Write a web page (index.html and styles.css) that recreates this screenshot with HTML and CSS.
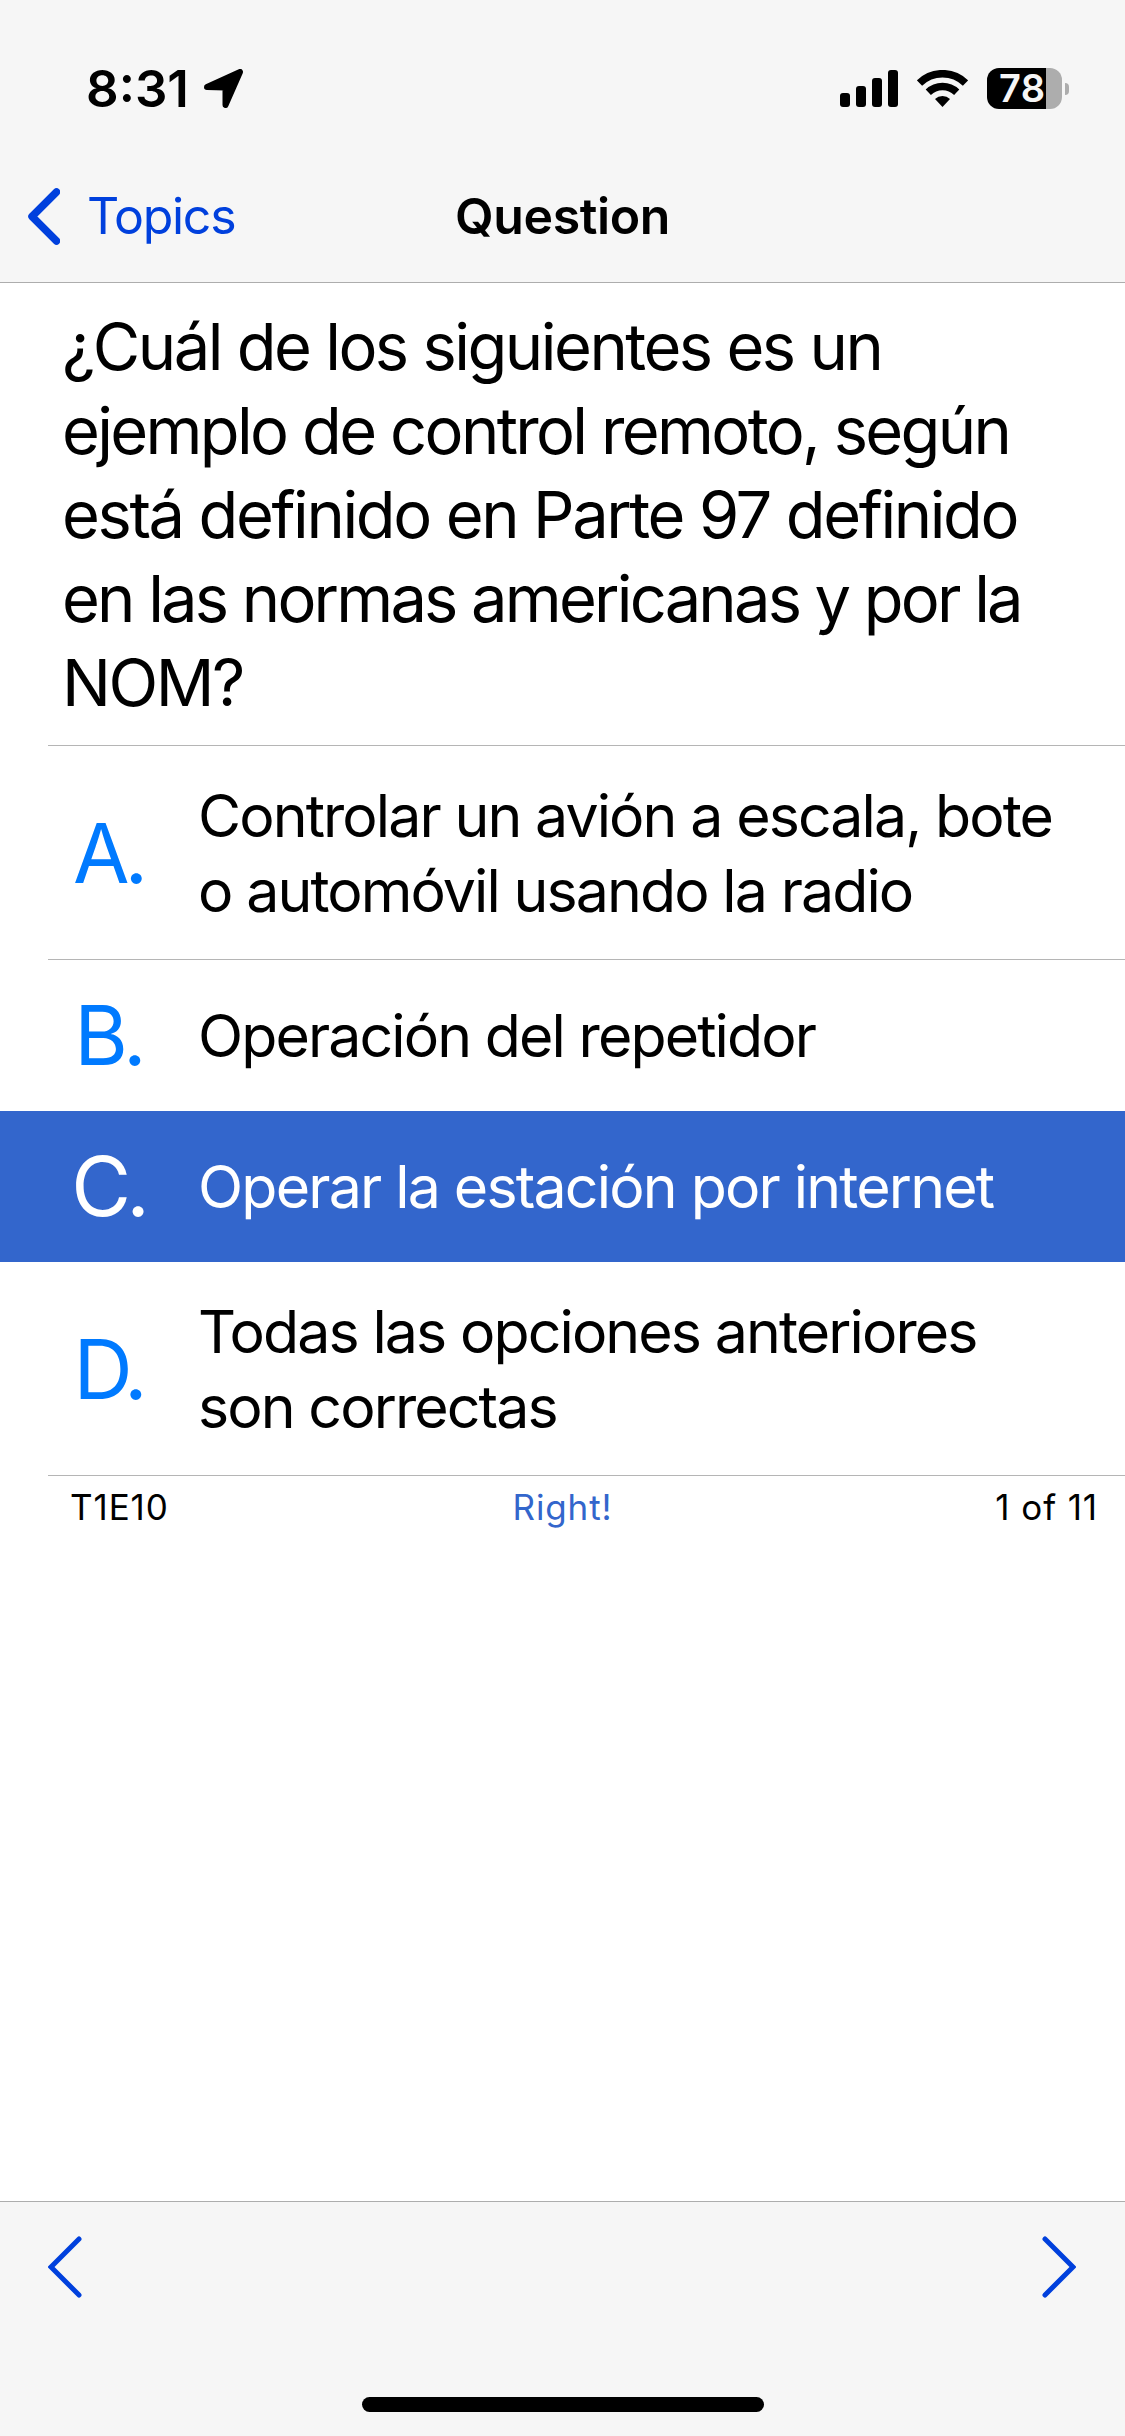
FILE: index.html
```html
<!DOCTYPE html>
<html lang="es">
<head>
    <meta charset="UTF-8">
    <meta name="viewport" content="width=device-width, initial-scale=1.0">
    <title>Question</title>
    <link rel="stylesheet" href="styles.css">
</head>
<body>

    <header class="header">
        <div class="status-bar">
            <div class="status-left">
                <span class="time">8:31</span>
                <svg class="location" width="40" height="40" viewBox="0 0 40 40">
                    <path d="M3 18 L36 3 L21.500 36 L21.500 18.500 Z" fill="#000" stroke="#000" stroke-width="6" stroke-linejoin="round"/>
                </svg>
            </div>
            <div class="status-right">
                <svg class="signal" width="58" height="37" viewBox="0 0 58 37">
                    <rect x="0" y="23" width="10" height="14" rx="3"/>
                    <rect x="16" y="16" width="10" height="21" rx="3"/>
                    <rect x="32" y="8" width="10" height="29" rx="3"/>
                    <rect x="48" y="0" width="10" height="37" rx="3"/>
                </svg>
                <svg class="wifi" width="51" height="37" viewBox="0 0 51 37">
                    <path d="M2.500 13 A33 33 0 0 1 48.500 13" fill="none" stroke="#000" stroke-width="7.500"/>
                    <path d="M11.300 22.300 A20.500 20.500 0 0 1 39.700 22.300" fill="none" stroke="#000" stroke-width="7.500"/>
                    <path d="M18 29 A11 11 0 0 1 33 29 L25.500 37 Z"/>
                </svg>
                <div class="battery"><span>78</span></div>
                <div class="battery-cap"></div>
            </div>
        </div>
        <nav class="nav">
            <a class="back">
                <svg width="33" height="57" viewBox="0 0 33 57">
                    <path d="M29.500 4 L5 28.500 L29.500 53" fill="none" stroke="#0040dd" stroke-width="7.500" stroke-linecap="round" stroke-linejoin="round"/>
                </svg>
                <span>Topics</span>
            </a>
            <h1>Question</h1>
        </nav>
    </header>

    <main class="content">
        <p class="question">
            <span>¿Cuál de los siguientes es un</span>
            <span>ejemplo de control remoto, según</span>
            <span>está definido en Parte 97 definido</span>
            <span>en las normas americanas y por la</span>
            <span>NOM?</span>
        </p>

        <div class="answer tall">
            <span class="letter">A.</span>
            <span class="text">Controlar un avión a escala, bote<br>o automóvil usando la radio</span>
        </div>
        <div class="answer">
            <span class="letter">B.</span>
            <span class="text">Operación del repetidor</span>
        </div>
        <div class="answer selected">
            <span class="letter">C.</span>
            <span class="text">Operar la estación por internet</span>
        </div>
        <div class="answer tall">
            <span class="letter">D.</span>
            <span class="text">Todas las opciones anteriores<br>son correctas</span>
        </div>

        <div class="info">
            <span class="code">T1E10</span>
            <span class="right">Right!</span>
            <span class="count">1 of 11</span>
        </div>
    </main>

    <footer class="toolbar">
        <div class="arrows">
            <svg width="34" height="62" viewBox="0 0 34 62">
                <path d="M31 3 L3 31 L31 59" fill="none" stroke="#0040dd" stroke-width="5" stroke-linecap="round"/>
            </svg>
            <svg width="34" height="62" viewBox="0 0 34 62">
                <path d="M3 3 L31 31 L3 59" fill="none" stroke="#0040dd" stroke-width="5" stroke-linecap="round"/>
            </svg>
        </div>
        <div class="home"></div>
    </footer>

</body>
</html>
```
FILE: styles.css
```css
* {
    box-sizing: border-box;
}
body {
    margin: 0;
    height: 2436px;
    display: flex;
    flex-direction: column;
    font-family: Inter, "Liberation Sans", sans-serif;
    color: #000;
    background-color: white;
    overflow: hidden;
}
svg {
    display: block;
    flex: none;
}

/* status bar + navigation */
.header {
    height: 283px;
    background-color: #f6f6f6;
    border-bottom: 1px solid #adadad;
}
.status-bar {
    height: 150px;
    padding: 68px 56px 0 86px;
    display: flex;
    justify-content: space-between;
}
.status-left,
.status-right {
    display: flex;
    height: 41px;
    align-items: center;
}
.time {
    font-size: 51px;
    font-weight: 600;
    line-height: 41px;
    width: 118px;
}
.wifi {
    margin: 0 19px;
}
.battery {
    width: 75px;
    height: 41px;
    border-radius: 12px;
    background: linear-gradient(to right, #000 59px, #adadad 59px);
    color: #f6f6f6;
    font-size: 38px;
    font-weight: 600;
    line-height: 41px;
    padding-left: 12px;
    letter-spacing: 0.5px;
}
.battery-cap {
    width: 4px;
    height: 12px;
    margin-left: 3px;
    border-radius: 0 4px 4px 0;
    background-color: #adadad;
}
.nav {
    height: 132px;
    padding: 0 27px;
    display: grid;
    grid-template-columns: 1fr auto 1fr;
    align-items: center;
}
.back {
    display: flex;
    align-items: center;
    gap: 27px;
    color: #0040dd;
    font-size: 50px;
    letter-spacing: -1.3px;
}
.nav h1 {
    margin: 0;
    font-size: 50px;
    font-weight: 600;
    letter-spacing: -0.4px;
}

/* question and answers */
.content {
    flex: 1;
}
.question {
    margin: 0 0 0 48px;
    height: 463px;
    padding: 22px 0 0 14px;
    font-size: 65px;
    line-height: 84px;
    letter-spacing: -2.5px;
    white-space: nowrap;
    border-bottom: 1px solid #b5b5b5;
}
.question span {
    display: block;
}
.question span:nth-child(2) {
    letter-spacing: -2.65px;
}
.question span:nth-child(3) {
    letter-spacing: -2.4px;
}
.question span:nth-child(4) {
    letter-spacing: -2.8px;
}
.answer {
    margin-left: 48px;
    height: 151px;
    display: flex;
    align-items: center;
    white-space: nowrap;
}
.answer.tall {
    height: 214px;
    border-bottom: 1px solid #b5b5b5;
}
.answer.selected {
    margin-left: 0;
    padding-left: 48px;
    background-color: #3366cc;
    color: white;
}
.letter {
    width: 124px;
    text-align: center;
    font-size: 82px;
    line-height: 100px;
    letter-spacing: -5px;
    padding-right: 4px;
    padding-top: 1px;
    color: #007aff;
}
.tall .letter {
    padding-top: 3px;
}
.selected .letter {
    color: white;
}
.text {
    margin-left: 26px;
    font-size: 59px;
    line-height: 75px;
    letter-spacing: -1.9px;
}
.selected .text {
    letter-spacing: -1.8px;
}
.info {
    padding: 9px 27px 0;
    display: grid;
    grid-template-columns: 1fr auto 1fr;
    font-size: 35px;
    line-height: 44px;
    letter-spacing: 0.9px;
}
.code {
    padding-left: 43px;
}
.right {
    color: #3366cc;
}
.count {
    text-align: right;
}

/* bottom toolbar */
.toolbar {
    height: 235px;
    background-color: #f6f6f6;
    border-top: 1px solid #adadad;
}
.arrows {
    height: 195px;
    padding: 34px 49px 0 48px;
    display: flex;
    justify-content: space-between;
}
.home {
    width: 402px;
    height: 15px;
    margin: 0 auto;
    border-radius: 8px;
    background-color: #000;
}
```
